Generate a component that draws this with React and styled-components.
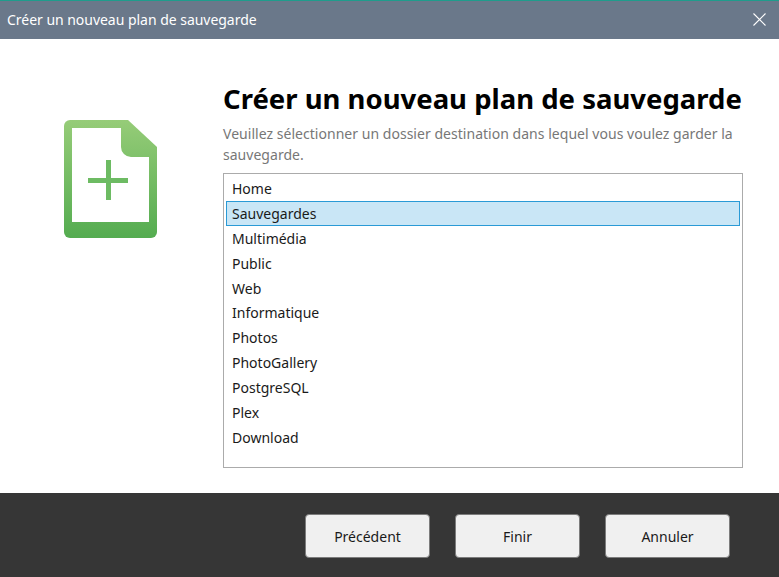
import React from 'react';
import styled, { createGlobalStyle } from 'styled-components';

const GlobalStyle = createGlobalStyle`
  html, body {
    margin: 0;
    padding: 0;
    height: 100%;
    background: #fff;
  }
  body {
    font-family: "Noto Sans", "Open Sans", sans-serif;
  }
`;

const Dialog = styled.div`
  width: 779px;
  height: 577px;
  display: flex;
  flex-direction: column;
  overflow: hidden;
`;

const TitleBar = styled.div`
  height: 39px;
  box-sizing: border-box;
  flex: none;
  background: #6a788a;
  border-top: 1px solid #1f9c8c;
  display: flex;
  align-items: center;
  justify-content: space-between;
  padding: 0 13px 2px 7px;
  color: #fff;
  font-size: 14px;
  letter-spacing: -0.03px;
`;

const CloseIcon = styled.svg`
  width: 13px;
  height: 13px;
  display: block;
`;

const Body = styled.div`
  flex: 1;
  display: flex;
  padding: 81px 36px 25px 64px;
  gap: 66px;
  min-height: 0;
`;

const FileIcon = styled.svg`
  width: 93px;
  height: 118px;
  flex: none;
`;

const Main = styled.div`
  flex: 1;
  display: flex;
  flex-direction: column;
  margin-top: -40px;
  min-width: 0;
`;

const Heading = styled.h1`
  margin: 0;
  font-size: 27.5px;
  line-height: 38px;
  font-weight: 700;
  color: #000;
  white-space: nowrap;
`;

const Description = styled.p`
  margin: 5px 0 8px;
  font-size: 14px;
  line-height: 21px;
  letter-spacing: 0.03px;
  color: #777;
`;

const List = styled.div`
  flex: 1;
  box-sizing: border-box;
  border: 1px solid #ababab;
  padding: 2px;
`;

const Row = styled.div`
  box-sizing: border-box;
  height: 24.9px;
  line-height: 23px;
  padding-left: 5px;
  font-size: 14px;
  color: #1a1a1a;
  border: 1px solid ${p => (p.$selected ? '#2a9ad6' : 'transparent')};
  background: ${p => (p.$selected ? '#c9e6f6' : 'transparent')};
`;

const Footer = styled.div`
  height: 84px;
  flex: none;
  box-sizing: border-box;
  background: #363636;
  display: flex;
  justify-content: flex-end;
  align-items: flex-start;
  gap: 25px;
  padding: 21px 49px 0 0;
`;

const Button = styled.button`
  width: 125px;
  height: 44px;
  box-sizing: border-box;
  border: 1.5px solid #7c7c7c;
  border-radius: 4px;
  background: #f0f0f0;
  color: #1a1a1a;
  font-family: inherit;
  font-size: 14px;
  padding: 0;
`;

const folders = [
  'Home',
  'Sauvegardes',
  'Multimédia',
  'Public',
  'Web',
  'Informatique',
  'Photos',
  'PhotoGallery',
  'PostgreSQL',
  'Plex',
  'Download',
];

const App = () => (
  <>
    <GlobalStyle />
    <Dialog>
      <TitleBar>
        <span>Créer un nouveau plan de sauvegarde</span>
        <CloseIcon viewBox="0 0 13 13">
          <path d="M0.5 0.5L12.5 12.5M12.5 0.5L0.5 12.5" stroke="#fff" strokeWidth="1.1" fill="none" />
        </CloseIcon>
      </TitleBar>
      <Body>
        <FileIcon viewBox="0 0 93 118">
          <defs>
            <linearGradient id="fileGreen" x1="0" y1="0" x2="0" y2="1">
              <stop offset="0" stopColor="#96cc78" />
              <stop offset="1" stopColor="#54ac50" />
            </linearGradient>
          </defs>
          <path
            d="M6 0H64L93 27V112a6 6 0 0 1-6 6H6a6 6 0 0 1-6-6V6a6 6 0 0 1 6-6Z"
            fill="url(#fileGreen)"
          />
          <path d="M8 8H57V27a10 10 0 0 0 10 10H85V102H8Z" fill="#fff" />
          <path d="M24 58H64V63H24ZM42 40H47V80H42Z" fill="#6dbb63" />
        </FileIcon>
        <Main>
          <Heading>Créer un nouveau plan de sauvegarde</Heading>
          <Description>
            Veuillez sélectionner un dossier destination dans lequel vous voulez garder la sauvegarde.
          </Description>
          <List>
            {folders.map(name => (
              <Row key={name} $selected={name === 'Sauvegardes'}>{name}</Row>
            ))}
          </List>
        </Main>
      </Body>
      <Footer>
        <Button>Précédent</Button>
        <Button>Finir</Button>
        <Button>Annuler</Button>
      </Footer>
    </Dialog>
  </>
);

export default App;
